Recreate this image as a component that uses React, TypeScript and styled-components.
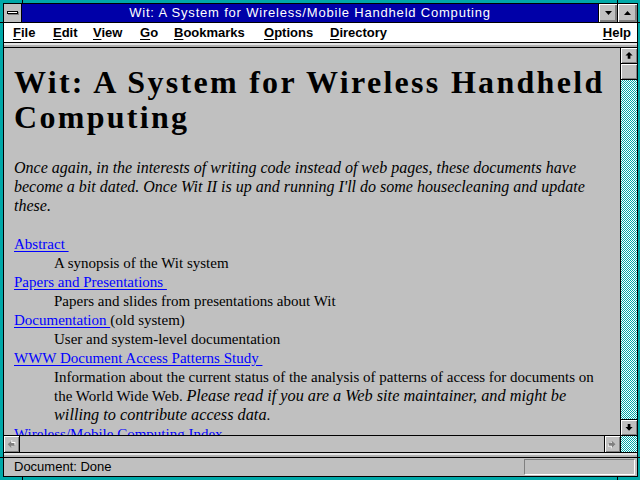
import React from 'react';
import styled, { createGlobalStyle } from 'styled-components';

const TEAL = '#00a8a8';
const FACE = '#c0c0c0';
const SHADOW = '#808080';

const GlobalStyle = createGlobalStyle`
  html, body {
    margin: 0;
    padding: 0;
  }
  body {
    width: 640px;
    height: 480px;
    overflow: hidden;
    background: ${TEAL};
  }
`;

const Frame = styled.div`
  position: relative;
  width: 640px;
  height: 480px;
  box-sizing: border-box;
  padding: 3px 2px 3px 3px;
  background: ${TEAL};
`;

// small black ticks cut into the sizing border near each corner
const Tick = styled.span<{ $x: number; $y: number; $w: number; $h: number }>`
  position: absolute;
  left: ${p => p.$x}px;
  top: ${p => p.$y}px;
  width: ${p => p.$w}px;
  height: ${p => p.$h}px;
  background: #000;
`;

const Window = styled.div`
  height: 100%;
  box-sizing: border-box;
  border: 1px solid #000;
  display: flex;
  flex-direction: column;
  background: ${FACE};
`;

const TitleBar = styled.div`
  height: 18px;
  flex: none;
  display: flex;
  background: #0000a8;
  border-bottom: 1px solid #000;
`;

const SysBox = styled.div`
  width: 17px;
  border-right: 1px solid #000;
  background: ${FACE};
  display: flex;
  align-items: center;
  justify-content: center;
`;

const SysBar = styled.span`
  width: 9px;
  height: 1px;
  background: #fff;
  border: 1px solid #000;
  box-shadow: 1px 1px 0 ${SHADOW};
  margin-top: -1px;
`;

const Title = styled.div`
  flex: 1;
  text-align: center;
  color: #fff;
  font: 13px/18px "Liberation Sans", Arial, sans-serif;
  letter-spacing: 0.8px;
  white-space: nowrap;
`;

const TitleBtn = styled.div<{ $w: number }>`
  width: ${p => p.$w}px;
  border-left: 1px solid #000;
  background: ${FACE};
  box-shadow: inset 1px 1px 0 #fff, inset -2px -2px 0 ${SHADOW};
  display: flex;
  align-items: center;
  justify-content: center;
`;

const MenuBar = styled.div`
  height: 19px;
  flex: none;
  display: flex;
  align-items: center;
  padding: 0 6px 0 9px;
  background: #fff;
  font: bold 13px/19px "Liberation Sans", Arial, sans-serif;
  color: #000;
`;

const MenuItem = styled.span<{ $w?: number; $right?: boolean }>`
  ${p => (p.$w ? `width: ${p.$w}px;` : '')}
  ${p => (p.$right ? 'margin-left: auto;' : '')}
  white-space: nowrap;
  u {
    text-decoration: underline;
    text-underline-offset: 2px;
  }
`;

const Strip = styled.div<{ $top?: boolean }>`
  height: 4px;
  flex: none;
  ${p => (p.$top ? 'border-top: 1px solid #000;' : '')}
  border-bottom: 1px solid #000;
  background: linear-gradient(#e4e4e4 0 2px, #b0b0b0 2px 4px);
`;

const Middle = styled.div`
  flex: 1;
  min-height: 0;
  display: flex;
`;

const Content = styled.div`
  flex: 1;
  min-width: 0;
  overflow: hidden;
  padding: 17px 10px 0 10px;
  font: 15px/19px "Liberation Serif", "Times New Roman", serif;
  color: #000;
`;

const Heading = styled.h1`
  margin: 0 0 23px;
  font-size: 32px;
  line-height: 35px;
  font-weight: bold;
  letter-spacing: 2.3px;
`;

const Intro = styled.p`
  margin: 0 0 20px;
  font-size: 16px;
  font-style: italic;
`;

const List = styled.dl`
  margin: 0;
`;

const Term = styled.dt`
  margin: 0;
`;

const Desc = styled.dd`
  margin: 0 0 0 40px;

  i {
    font-size: 16.3px;
    line-height: 15px;
  }
`;

const Link = styled.a`
  color: #0000ff;
  text-decoration: underline;
  text-underline-offset: 2px;
`;

const checker = `repeating-conic-gradient(${TEAL} 0% 25%, #fff 0% 50%) 0 0 / 2px 2px`;

const VScroll = styled.div`
  width: 16px;
  flex: none;
  border-left: 1px solid #000;
  display: flex;
  flex-direction: column;
`;

const ScrollBtn = styled.div<{ $edge?: 'top' | 'bottom' }>`
  height: 15px;
  flex: none;
  background: ${FACE};
  box-shadow: inset 1px 1px 0 #fff, inset -1px -1px 0 ${SHADOW};
  ${p => (p.$edge === 'top' ? 'border-top: 1px solid #000;' : '')}
  ${p => (p.$edge === 'bottom' ? 'border-bottom: 1px solid #000;' : '')}
  display: flex;
  align-items: center;
  justify-content: center;
`;

const Track = styled.div`
  flex: 1;
  background: ${checker};
`;

const HScroll = styled.div`
  height: 16px;
  flex: none;
  border-top: 1px solid #000;
  border-bottom: 1px solid #000;
  display: flex;
`;

const HBtn = styled.div<{ $side: 'left' | 'right' }>`
  width: 15px;
  flex: none;
  background: ${FACE};
  box-shadow: inset 1px 1px 0 #fff, inset -1px -1px 0 ${SHADOW};
  border-${p => (p.$side === 'left' ? 'right' : 'left')}: 1px solid #000;
  display: flex;
  align-items: center;
  justify-content: center;
`;

const HTrack = styled.div`
  flex: 1;
  background: ${FACE};
`;

const Corner = styled.div`
  width: 16px;
  flex: none;
  border-left: 1px solid #000;
  background: ${checker};
`;

const StatusBar = styled.div`
  height: 18px;
  flex: none;
  display: flex;
  align-items: center;
  justify-content: space-between;
  padding: 0 2px 0 10px;
  font: 13px/18px "Liberation Sans", Arial, sans-serif;
  color: #000;
`;

const StatusBox = styled.div`
  width: 111px;
  height: 16px;
  box-sizing: border-box;
  border-top: 1px solid ${SHADOW};
  border-left: 1px solid ${SHADOW};
  border-bottom: 1px solid #fff;
  border-right: 1px solid #fff;
`;

function Triangle({ up }: { up?: boolean }) {
  return (
    <svg width="7" height="4" viewBox="0 0 7 4">
      <polygon points={up ? '3.5,0 7,4 0,4' : '0,0 7,0 3.5,4'} fill="#000" />
    </svg>
  );
}

function Arrow({ dir, disabled }: { dir: 'up' | 'down' | 'left' | 'right'; disabled?: boolean }) {
  const rot = { up: 0, right: 90, down: 180, left: 270 }[dir];
  const pts = '4.5,1 8.5,5 6,5 6,8.5 3,8.5 3,5 0.5,5';
  return (
    <svg width="9" height="9" viewBox="0 0 10 10">
      <g transform={`rotate(${rot} 4.5 4.75)`}>
        {disabled && <polygon points={pts} fill="#fff" transform="translate(1 1)" />}
        <polygon points={pts} fill={disabled ? SHADOW : '#000'} />
      </g>
    </svg>
  );
}

const menus: { label: string; w?: number }[] = [
  { label: 'File', w: 40 },
  { label: 'Edit', w: 40 },
  { label: 'View', w: 47 },
  { label: 'Go', w: 34 },
  { label: 'Bookmarks', w: 90 },
  { label: 'Options', w: 66 },
  { label: 'Directory' },
];

const ticks = [
  { x: 22, y: 0, w: 1, h: 3 },
  { x: 617, y: 0, w: 1, h: 3 },
  { x: 0, y: 22, w: 3, h: 1 },
  { x: 637, y: 22, w: 3, h: 1 },
  { x: 22, y: 477, w: 1, h: 3 },
  { x: 617, y: 477, w: 1, h: 3 },
  { x: 0, y: 457, w: 3, h: 1 },
  { x: 637, y: 457, w: 3, h: 1 },
];

export default function App() {
  return (
    <>
      <GlobalStyle />
      <Frame>
        {ticks.map((t, i) => (
          <Tick key={i} $x={t.x} $y={t.y} $w={t.w} $h={t.h} />
        ))}
        <Window>
          <TitleBar>
            <SysBox>
              <SysBar />
            </SysBox>
            <Title>Wit: A System for Wireless/Mobile Handheld Computing</Title>
            <TitleBtn $w={18}>
              <Triangle />
            </TitleBtn>
            <TitleBtn $w={19}>
              <Triangle up />
            </TitleBtn>
          </TitleBar>

          <MenuBar>
            {menus.map(m => (
              <MenuItem key={m.label} $w={m.w}>
                <u>{m.label[0]}</u>
                {m.label.slice(1)}
              </MenuItem>
            ))}
            <MenuItem $right>
              <u>H</u>elp
            </MenuItem>
          </MenuBar>
          <Strip $top />

          <Middle>
            <Content>
              <Heading>Wit: A System for Wireless Handheld Computing</Heading>
              <Intro>
                Once again, in the interests of writing code instead of web pages, these documents have
                become a bit dated. Once Wit II is up and running I'll do some housecleaning and update
                these.
              </Intro>
              <List>
                <Term>
                  <Link href="#">Abstract&nbsp;</Link>
                </Term>
                <Desc>A synopsis of the Wit system</Desc>
                <Term>
                  <Link href="#">Papers and Presentations&nbsp;</Link>
                </Term>
                <Desc>Papers and slides from presentations about Wit</Desc>
                <Term>
                  <Link href="#">Documentation&nbsp;</Link>(old system)
                </Term>
                <Desc>User and system-level documentation</Desc>
                <Term>
                  <Link href="#">WWW Document Access Patterns Study&nbsp;</Link>
                </Term>
                <Desc>
                  Information about the current status of the analysis of patterns of access for
                  documents on the World Wide Web.{' '}
                  <i>
                    Please read if you are a Web site maintainer, and might be willing to contribute
                    access data
                  </i>
                  .
                </Desc>
                <Term>
                  <Link href="#">Wireless/Mobile Computing Index&nbsp;</Link>
                </Term>
                <Desc>An index of wireless and mobile computing resources</Desc>
              </List>
            </Content>
            <VScroll>
              <ScrollBtn $edge="bottom">
                <Arrow dir="up" />
              </ScrollBtn>
              <ScrollBtn $edge="bottom" />
              <Track />
              <ScrollBtn $edge="top">
                <Arrow dir="down" />
              </ScrollBtn>
            </VScroll>
          </Middle>

          <HScroll>
            <HBtn $side="left">
              <Arrow dir="left" disabled />
            </HBtn>
            <HTrack />
            <HBtn $side="right">
              <Arrow dir="right" disabled />
            </HBtn>
            <Corner />
          </HScroll>
          <Strip />

          <StatusBar>
            <span>Document: Done</span>
            <StatusBox />
          </StatusBar>
        </Window>
      </Frame>
    </>
  );
}
